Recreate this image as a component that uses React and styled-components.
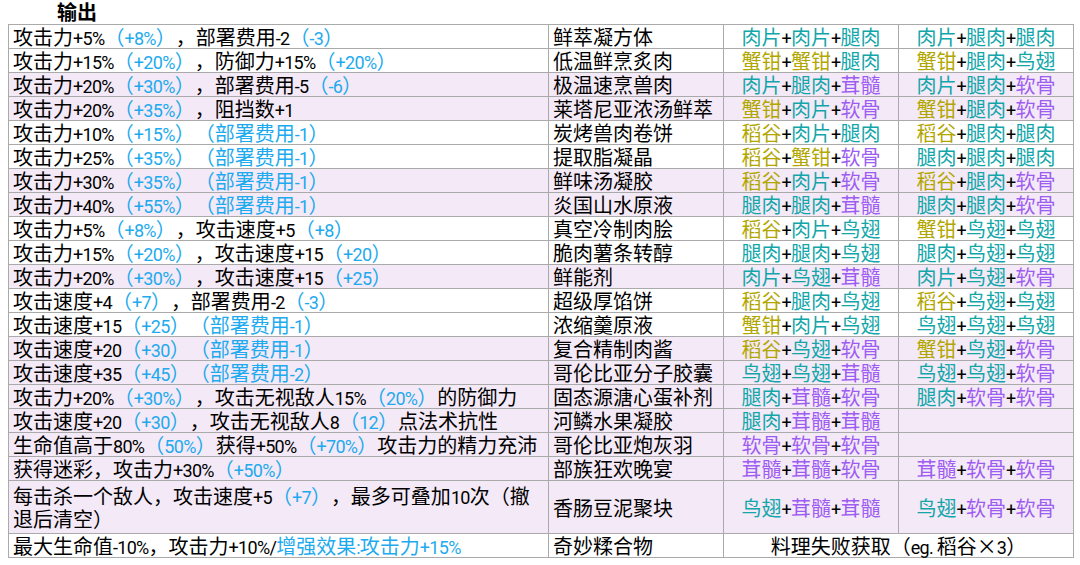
import React from 'react';
import styled, { createGlobalStyle } from 'styled-components';

const GlobalStyle = createGlobalStyle`
  body {
    margin: 0;
    background: #ffffff;
    font-family: "Noto Sans CJK SC", "Noto Sans", sans-serif;
    text-spacing-trim: space-all;
  }
`;

const colors = {
  肉片: '#12a6aa',
  腿肉: '#12a6aa',
  鸟翅: '#12a6aa',
  蟹钳: '#b2a600',
  稻谷: '#b2a600',
  茸髓: '#9d5cf2',
  软骨: '#9d5cf2',
};

// {} marks the bracketed blue parts of an effect
const rows = [
  ['攻击力+5%{（+8%）}，部署费用-2{（-3）}', '鲜萃凝方体', '肉片+肉片+腿肉', '肉片+腿肉+腿肉', false],
  ['攻击力+15%{（+20%）}，防御力+15%{（+20%）}', '低温鲜烹炙肉', '蟹钳+蟹钳+腿肉', '蟹钳+腿肉+鸟翅', false],
  ['攻击力+20%{（+30%）}，部署费用-5{（-6）}', '极温速烹兽肉', '肉片+腿肉+茸髓', '肉片+腿肉+软骨', true],
  ['攻击力+20%{（+35%）}，阻挡数+1', '莱塔尼亚浓汤鲜萃', '蟹钳+肉片+软骨', '蟹钳+腿肉+软骨', true],
  ['攻击力+10%{（+15%）（部署费用-1）}', '炭烤兽肉卷饼', '稻谷+肉片+腿肉', '稻谷+腿肉+腿肉', false],
  ['攻击力+25%{（+35%）（部署费用-1）}', '提取脂凝晶', '稻谷+蟹钳+软骨', '腿肉+腿肉+腿肉', false],
  ['攻击力+30%{（+35%）（部署费用-1）}', '鲜味汤凝胶', '稻谷+肉片+软骨', '稻谷+腿肉+软骨', true],
  ['攻击力+40%{（+55%）（部署费用-1）}', '炎国山水原液', '腿肉+腿肉+茸髓', '腿肉+腿肉+软骨', true],
  ['攻击力+5%{（+8%）}，攻击速度+5{（+8）}', '真空冷制肉脍', '稻谷+肉片+鸟翅', '蟹钳+鸟翅+鸟翅', false],
  ['攻击力+15%{（+20%）}，攻击速度+15{（+20）}', '脆肉薯条转醇', '腿肉+腿肉+鸟翅', '腿肉+鸟翅+鸟翅', false],
  ['攻击力+20%{（+30%）}，攻击速度+15{（+25）}', '鲜能剂', '肉片+鸟翅+茸髓', '肉片+鸟翅+软骨', true],
  ['攻击速度+4{（+7）}，部署费用-2{（-3）}', '超级厚馅饼', '稻谷+腿肉+鸟翅', '稻谷+鸟翅+鸟翅', false],
  ['攻击速度+15{（+25）（部署费用-1）}', '浓缩羹原液', '蟹钳+肉片+鸟翅', '鸟翅+鸟翅+鸟翅', false],
  ['攻击速度+20{（+30）（部署费用-1）}', '复合精制肉酱', '稻谷+鸟翅+软骨', '蟹钳+鸟翅+软骨', true],
  ['攻击速度+35{（+45）（部署费用-2）}', '哥伦比亚分子胶囊', '鸟翅+鸟翅+茸髓', '鸟翅+鸟翅+软骨', true],
  ['攻击力+20%{（+30%）}，攻击无视敌人15%{（20%）}的防御力', '固态源溏心蛋补剂', '腿肉+茸髓+软骨', '腿肉+软骨+软骨', true],
  ['攻击速度+20{（+30）}，攻击无视敌人8{（12）}点法术抗性', '河鳞水果凝胶', '腿肉+茸髓+茸髓', '', true],
  ['生命值高于80%{（50%）}获得+50%{（+70%）}攻击力的精力充沛', '哥伦比亚炮灰羽', '软骨+软骨+软骨', '', true],
  ['获得迷彩，攻击力+30%{（+50%）}', '部族狂欢晚宴', '茸髓+茸髓+软骨', '茸髓+软骨+软骨', true],
  ['每击杀一个敌人，攻击速度+5{（+7）}，最多可叠加10次（撤退后清空）', '香肠豆泥聚块', '鸟翅+茸髓+茸髓', '鸟翅+软骨+软骨', true, true],
];

// latin runs get their own narrower face, as in the sheet
function Mixed({ text }) {
  return text.split(/([\x20-\x7e]+)/).filter(Boolean).map((p, i) =>
    /^[\x20-\x7e]+$/.test(p) ? <Latin key={i}>{p}</Latin> : <React.Fragment key={i}>{p}</React.Fragment>
  );
}

function Effect({ text }) {
  const parts = text.split(/(\{[^}]*\})/).filter(Boolean);
  return parts.map((p, i) =>
    p.startsWith('{') ? (
      <Blue key={i}><Mixed text={p.slice(1, -1)} /></Blue>
    ) : (
      <Mixed key={i} text={p} />
    )
  );
}

function Recipe({ text }) {
  if (!text) return null;
  const items = text.split('+');
  return items.map((name, i) => (
    <React.Fragment key={i}>
      {i > 0 && <Latin>+</Latin>}
      <Ingredient $color={colors[name]}>{name}</Ingredient>
    </React.Fragment>
  ));
}

export default function App() {
  return (
    <Page>
      <GlobalStyle />
      <Title>输出</Title>
      <Table>
        <colgroup>
          <col style={{ width: 540 }} />
          <col style={{ width: 175 }} />
          <col style={{ width: 175 }} />
          <col style={{ width: 175 }} />
        </colgroup>
        <tbody>
          {rows.map(([effect, dish, r1, r2, shade, tall]) => (
            <Row key={dish} $shade={shade} $tall={tall}>
              <Cell $wrap={tall}><Effect text={effect} /></Cell>
              <Cell>{dish}</Cell>
              <Cell $center><Recipe text={r1} /></Cell>
              <Cell $center><Recipe text={r2} /></Cell>
            </Row>
          ))}
          <Row>
            <Cell>
              <Effect text="最大生命值-10%，攻击力+10%/{增强效果:攻击力+15%}" />
            </Cell>
            <Cell>奇妙糅合物</Cell>
            <Cell $center colSpan={2}>
              <Mixed text="料理失败获取（eg. 稻谷×3）" />
            </Cell>
          </Row>
        </tbody>
      </Table>
    </Page>
  );
}

const Page = styled.div`
  padding: 0 8px;
  width: 1080px;
  box-sizing: border-box;
`;

const Title = styled.div`
  height: 24px;
  line-height: 24px;
  padding-left: 49px;
  font-size: 20px;
  font-weight: bold;
  color: #000;
`;

const Table = styled.table`
  border-collapse: collapse;
  table-layout: fixed;
  width: 1065px;
  font-size: 20px;
  color: #000;
`;

const Row = styled.tr`
  background: ${(p) => (p.$shade ? '#f4e9f6' : '#ffffff')};
  height: ${(p) => (p.$tall ? '53px' : '24px')};
`;

const Cell = styled.td`
  border: 1px solid #aaaaaa;
  padding: 0 4px;
  line-height: 23px;
  text-align: ${(p) => (p.$center ? 'center' : 'left')};
  vertical-align: middle;
  white-space: ${(p) => (p.$wrap ? 'normal' : 'nowrap')};
  word-break: break-all;
`;

const Latin = styled.span`
  font-family: Roboto, "Noto Sans", sans-serif;
  font-size: 18px;
  letter-spacing: -0.7px;
  line-height: 1;
`;

const Blue = styled.span`
  color: #1eaaee;
`;

const Ingredient = styled.span`
  color: ${(p) => p.$color};
`;
